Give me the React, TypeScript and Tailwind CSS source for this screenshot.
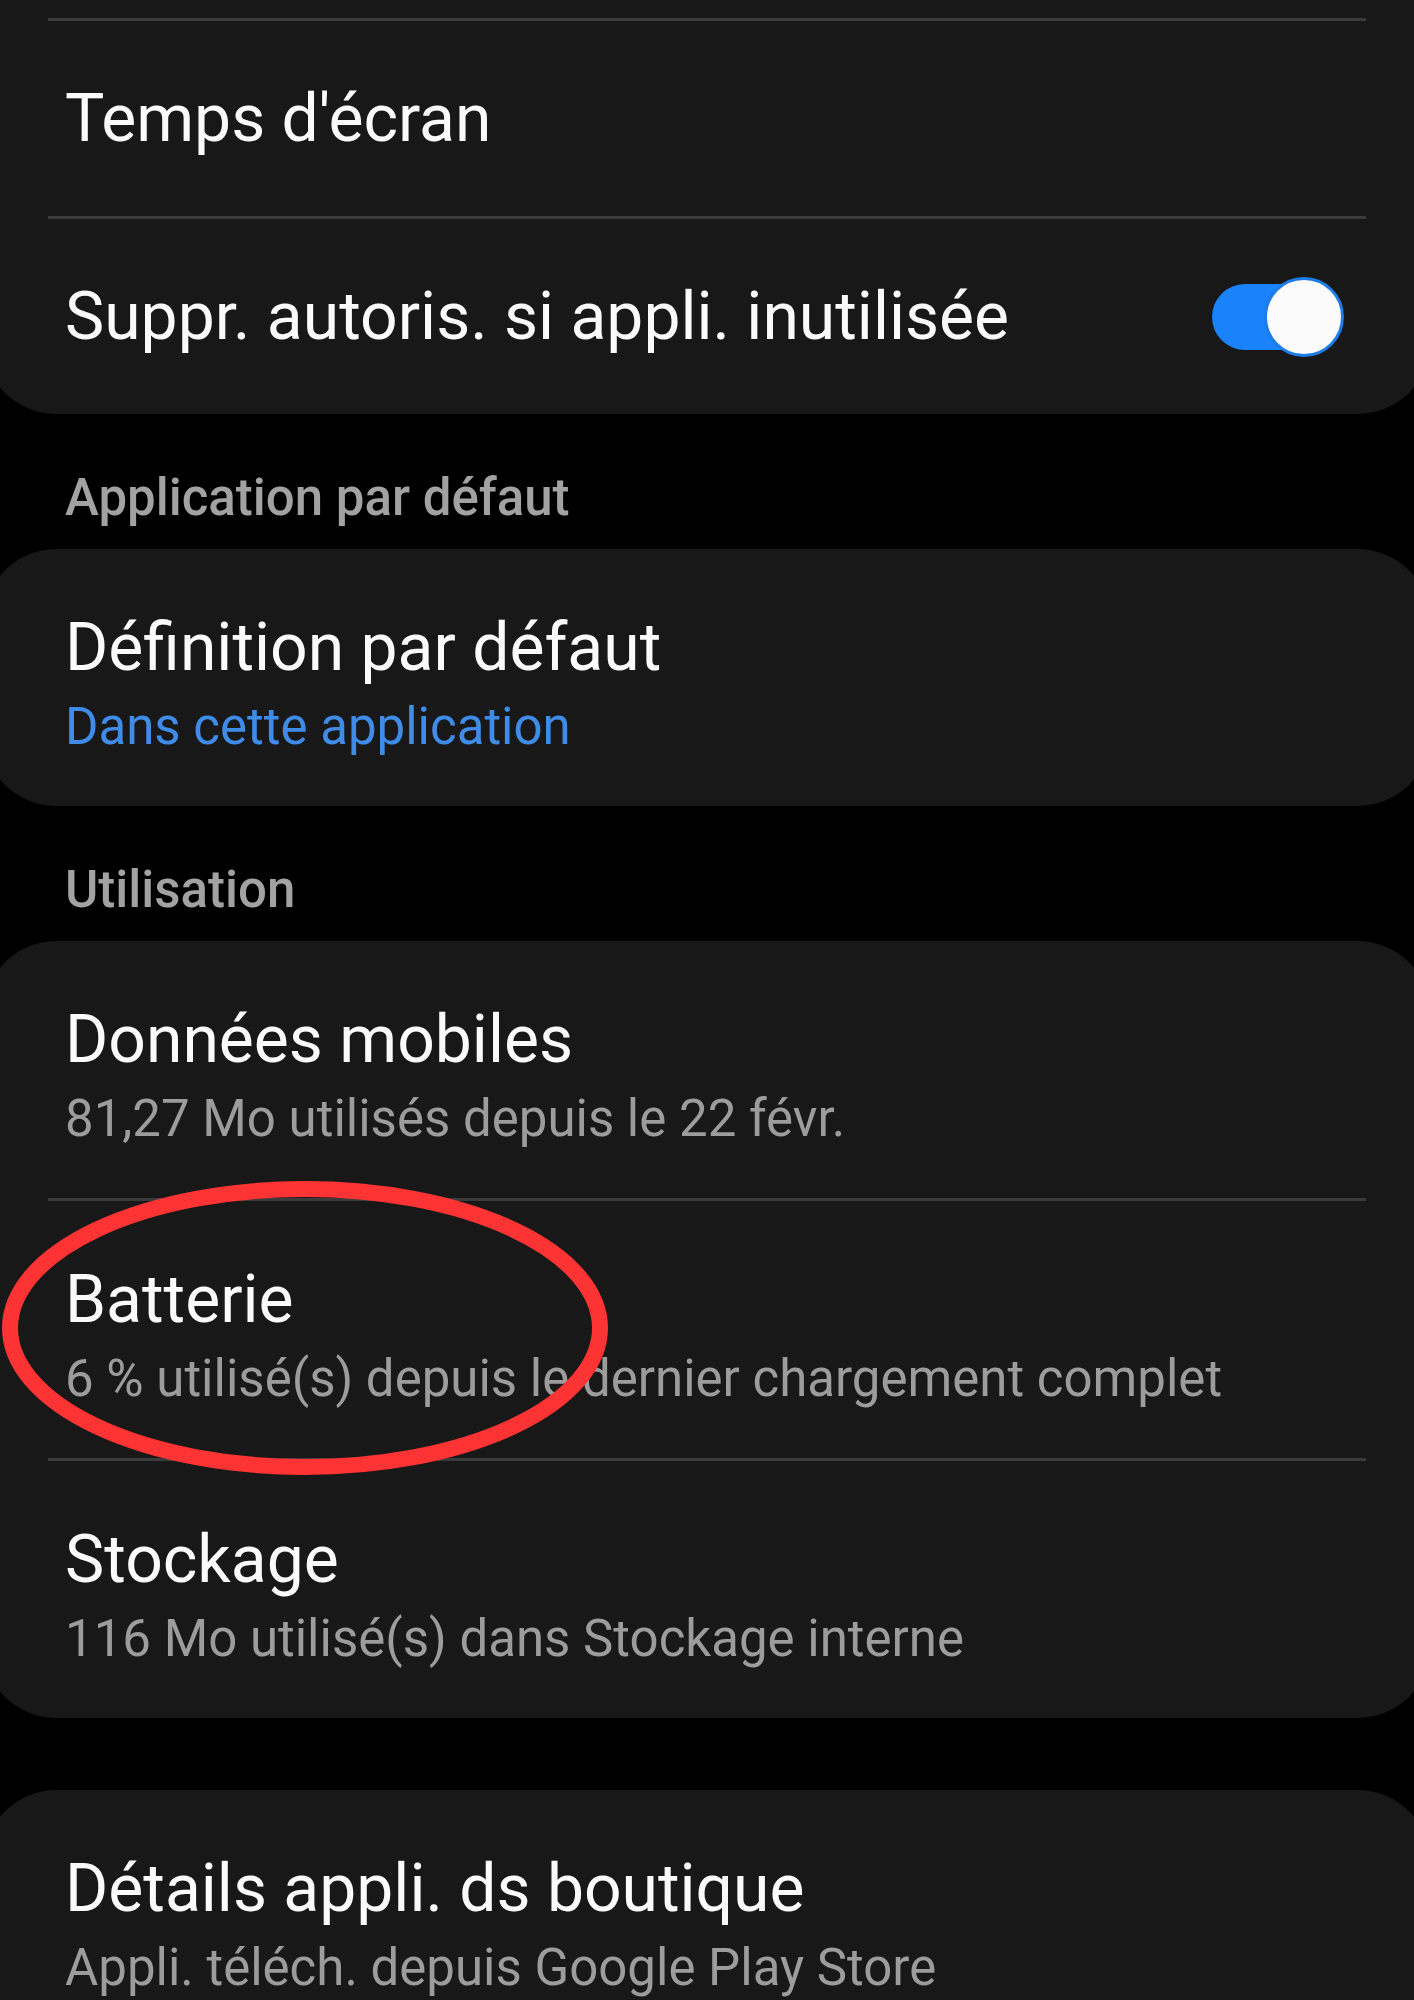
import React from "react";

type Row = {
  title: string;
  sub?: string;
  subBlue?: boolean;
  toggle?: boolean;
};

const Divider = () => <div className="mx-[64px] h-[3px] bg-[#3b3b3b]" />;

const Toggle = () => (
  <div className="relative h-[80px] w-[132px] shrink-0">
    <div className="absolute left-0 top-[7px] h-[66px] w-[120px] rounded-full bg-[#1a82fa]" />
    <div className="absolute right-0 top-0 h-[80px] w-[80px] rounded-full border-[3px] border-[#1d7ce8] bg-[#fbfbfb]" />
  </div>
);

const SettingRow = ({ row }: { row: Row }) => {
  if (!row.sub) {
    return (
      <div className="flex h-[195px] items-center justify-between pl-[81px] pr-[86px]">
        <span className="text-[66px] leading-[76px] text-[#fafafa]">{row.title}</span>
        {row.toggle && <Toggle />}
      </div>
    );
  }
  return (
    <div className="flex h-[257px] flex-col pl-[81px] pr-[86px] pt-[61px]">
      <span className="text-[66px] leading-[76px] text-[#fafafa]">{row.title}</span>
      <span
        className={
          row.subBlue
            ? "mt-[3px] text-[51px] leading-[76px] text-[#3f8ce8]"
            : "mt-[3px] text-[51px] leading-[76px] text-[#9c9c9c]"
        }
      >
        {row.sub}
      </span>
    </div>
  );
};

const Card = ({ rows, className }: { rows: Row[]; className: string }) => (
  <div className={"bg-[#181818] " + className}>
    {rows.map((row, i) => (
      <div key={row.title}>
        {i > 0 && <Divider />}
        <SettingRow row={row} />
      </div>
    ))}
  </div>
);

const Header = ({ label }: { label: string }) => (
  <div className="pl-[81px] pt-[54px] pb-[21px] text-[51px] font-medium leading-[60px] text-[#a2a2a2]">
    {label}
  </div>
);

export default function App() {
  return (
    <div
      className="relative h-[2000px] w-[1414px] overflow-hidden bg-black"
      style={{ fontFamily: "Roboto, 'Noto Sans', sans-serif" }}
    >
      <div className="-mx-[16px]">
        {/* top card, cut by the screen edge */}
        <div className="rounded-b-[72px] bg-[#181818] pt-[18px]">
          <Divider />
          <SettingRow row={{ title: "Temps d'écran" }} />
          <Divider />
          <SettingRow row={{ title: "Suppr. autoris. si appli. inutilisée", toggle: true }} />
        </div>

        <Header label="Application par défaut" />
        <Card
          className="rounded-[72px]"
          rows={[{ title: "Définition par défaut", sub: "Dans cette application", subBlue: true }]}
        />

        <Header label="Utilisation" />
        <Card
          className="rounded-[72px]"
          rows={[
            { title: "Données mobiles", sub: "81,27 Mo utilisés depuis le 22 févr." },
            { title: "Batterie", sub: "6 % utilisé(s) depuis le dernier chargement complet" },
            { title: "Stockage", sub: "116 Mo utilisé(s) dans Stockage interne" },
          ]}
        />

        <div className="mt-[72px]">
          <Card
            className="rounded-t-[72px]"
            rows={[{ title: "Détails appli. ds boutique", sub: "Appli. téléch. depuis Google Play Store" }]}
          />
        </div>
      </div>

      {/* red annotation circle */}
      <svg
        className="pointer-events-none absolute left-0 top-0"
        width="1414"
        height="2000"
        viewBox="0 0 1414 2000"
      >
        <ellipse cx="305" cy="1328" rx="295" ry="139" fill="none" stroke="#fe3333" strokeWidth="16" />
      </svg>
    </div>
  );
}
